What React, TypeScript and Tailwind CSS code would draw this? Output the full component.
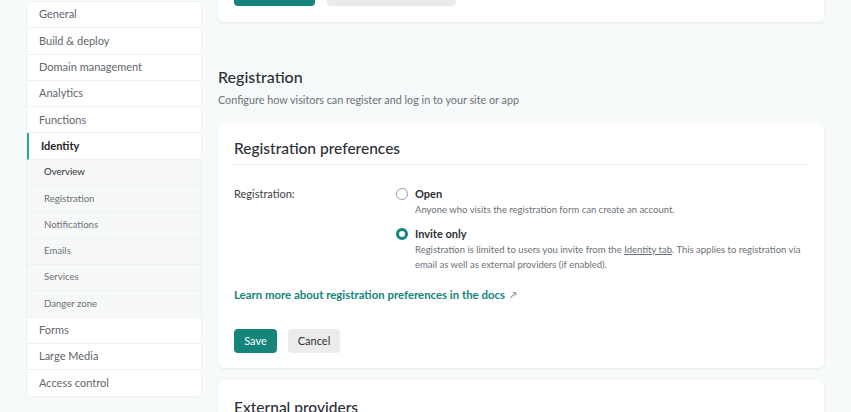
import React from "react";

const font = { fontFamily: 'Lato, "Open Sans", sans-serif' };

function NavItem({ label, sub, active, bold }: { label: string; sub?: boolean; active?: boolean; bold?: boolean }) {
  return (
    <div
      className={
        "h-[26.3px] flex items-center border-b border-[#eef1f1] " +
        (sub ? "bg-[#f7f8f8] pl-[17px] text-[9.6px] " : "pl-[12px] text-[11px] ") +
        (active ? "border-l-2 border-l-[#2aa79b] pl-[10px] font-bold text-[#1e2328] " : "") +
        (sub && bold ? "text-[#2b3036] " : sub ? "text-[#6b7177] " : active ? "" : "text-[#5f666c] ")
      }
    >
      {label}
    </div>
  );
}

export default function App() {
  return (
    <div className="w-[851px] h-[412px] overflow-hidden bg-[#f6fafa] flex" style={font}>
      <div className="pl-[27px] pt-[2px] w-[201px] shrink-0">
        <div className="bg-white rounded-[4px] overflow-hidden shadow-[0_0_0_1px_#eef2f2]">
          <NavItem label="General" />
          <NavItem label="Build & deploy" />
          <NavItem label="Domain management" />
          <NavItem label="Analytics" />
          <NavItem label="Functions" />
          <NavItem label="Identity" active />
          <NavItem label="Overview" sub bold />
          <NavItem label="Registration" sub />
          <NavItem label="Notifications" sub />
          <NavItem label="Emails" sub />
          <NavItem label="Services" sub />
          <NavItem label="Danger zone" sub />
          <NavItem label="Forms" />
          <NavItem label="Large Media" />
          <div className="h-[26.3px] flex items-center pl-[12px] text-[11px] text-[#5f666c]">Access control</div>
        </div>
      </div>

      <div className="ml-[17px] w-[606px] shrink-0 flex flex-col">
        <div className="-mt-[60px] bg-white rounded-[6px] shadow-[0_1px_3px_rgba(0,0,0,0.08)] px-[16px] pt-[36px] pb-[16px] flex gap-[12px]">
          <div className="h-[30px] w-[81px] rounded-[4px] bg-[#15847a]" />
          <div className="h-[30px] w-[129px] rounded-[4px] bg-[#e9eaea]" />
        </div>

        <div className="mt-[45px]">
          <h2 className="text-[16px] font-medium text-[#2b3036] leading-[20px]">Registration</h2>
          <p className="mt-[6px] text-[10.8px] text-[#6b7177] leading-[14px]">Configure how visitors can register and log in to your site or app</p>
        </div>

        <div className="mt-[16px] bg-white rounded-[6px] shadow-[0_1px_3px_rgba(0,0,0,0.08)] px-[16px] pt-[14px] pb-[15px]">
          <h3 className="text-[15.5px] font-medium text-[#2b3036] leading-[22px] pb-[5px] border-b border-[#eef1f1]">
            Registration preferences
          </h3>
          <div className="flex mt-[21px]">
            <div className="w-[162px] shrink-0 text-[11px] text-[#3c4247] leading-[16px]">Registration:</div>
            <div className="flex flex-col gap-[9px]">
              <div className="flex gap-[7px]">
                <span className="mt-[2px] w-[12px] h-[12px] rounded-full border border-[#9aa0a4] bg-white shrink-0" />
                <div>
                  <div className="text-[11px] font-bold text-[#2b3036] leading-[16px]">Open</div>
                  <div className="text-[9.5px] text-[#6b7177] leading-[15px]">Anyone who visits the registration form can create an account.</div>
                </div>
              </div>
              <div className="flex gap-[7px]">
                <span className="mt-[2px] w-[12px] h-[12px] rounded-full border-[3.5px] border-[#15847a] bg-white shrink-0" />
                <div>
                  <div className="text-[11px] font-bold text-[#2b3036] leading-[16px]">Invite only</div>
                  <div className="text-[9.5px] text-[#6b7177] leading-[15px] w-[395px]">
                    Registration is limited to users you invite from the <span className="underline">Identity tab</span>. This applies to registration via email as well as external providers (if enabled).
                  </div>
                </div>
              </div>
            </div>
          </div>
          <div className="mt-[15px] text-[11.4px] font-bold text-[#15847a] leading-[16px] flex items-center gap-[5px]">
            Learn more about registration preferences in the docs
            <span className="text-[9px] font-normal text-[#6b7177]">↗</span>
          </div>
          <div className="mt-[26px] flex gap-[11px]">
            <button className="h-[24px] w-[43px] rounded-[4px] bg-[#15847a] text-white text-[11px]">Save</button>
            <button className="h-[24px] w-[52px] rounded-[4px] bg-[#ececec] text-[#2b3036] text-[11px]">Cancel</button>
          </div>
        </div>

        <div className="mt-[12px] bg-white rounded-[6px] shadow-[0_1px_3px_rgba(0,0,0,0.08)] px-[16px] pt-[16px] pb-[20px]">
          <h3 className="text-[15.5px] font-medium text-[#2b3036] leading-[22px]">External providers</h3>
        </div>
      </div>
    </div>
  );
}
